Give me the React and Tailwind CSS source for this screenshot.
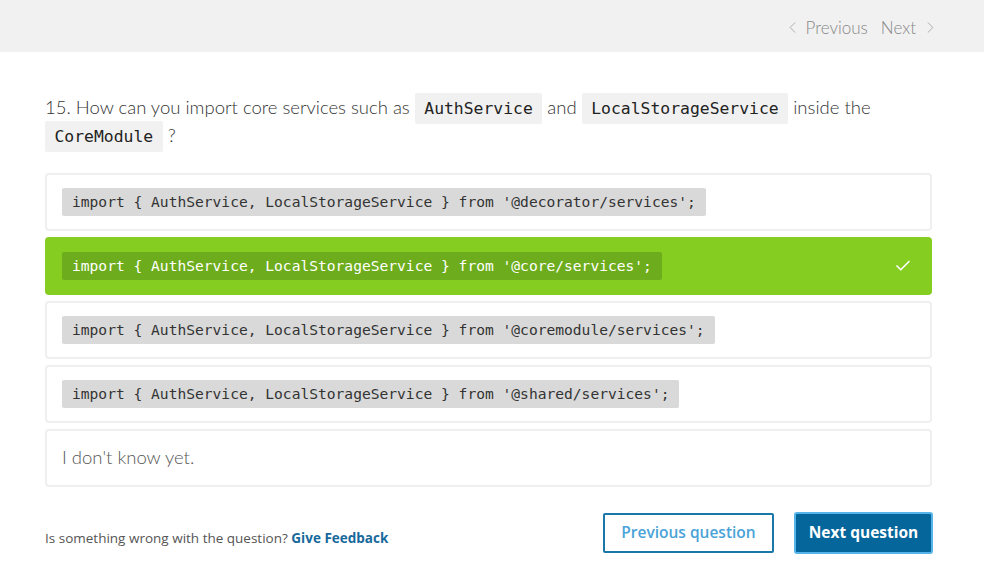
import { Check, ChevronLeft, ChevronRight } from 'lucide-react'

const options = [
  { code: "import { AuthService, LocalStorageService } from '@decorator/services';" },
  { code: "import { AuthService, LocalStorageService } from '@core/services';", correct: true },
  { code: "import { AuthService, LocalStorageService } from '@coremodule/services';" },
  { code: "import { AuthService, LocalStorageService } from '@shared/services';" },
]

const mono = { fontFamily: '"DejaVu Sans Mono", "Liberation Mono", monospace' }
const open = { fontFamily: '"Open Sans", "Noto Sans", sans-serif' }

function InlineCode({ children }) {
  return (
    <code
      className="rounded-[2px] bg-[#f1f1f1] px-[9.5px] py-[6px] text-[16.4px] leading-[20px] text-[#222]"
      style={mono}
    >
      {children}
    </code>
  )
}

function Option({ code, correct }) {
  if (correct) {
    return (
      <div className="flex h-[58px] items-center justify-between rounded-[4px] bg-[#86cd22] pl-[17px] pr-[20px]">
        <span
          className="rounded-[2px] bg-[#6dad1d] px-[10px] py-[5px] text-[14.6px] leading-[18px] text-white"
          style={mono}
        >
          {code}
        </span>
        <Check size={18} strokeWidth={2.2} className="text-white" />
      </div>
    )
  }
  return (
    <div className="flex h-[58px] items-center rounded-[4px] border-2 border-[#efefef] bg-white px-[15px]">
      <span
        className="rounded-[2px] bg-[#d9d9d9] px-[10px] py-[5px] text-[14.6px] leading-[18px] text-[#333]"
        style={mono}
      >
        {code}
      </span>
    </div>
  )
}

export default function App() {
  return (
    <div className="min-h-[576px] bg-white" style={{ fontFamily: 'Lato, "Noto Sans", sans-serif' }}>
      <header className="flex h-[52px] items-center justify-end gap-[13px] bg-[#f1f1f1] pt-[3px] pr-[44px] text-[17px] font-light text-[#888]">
        <span className="flex items-center gap-[4px]">
          <ChevronLeft size={19} strokeWidth={1.2} className="text-[#aaa]" />
          Previous
        </span>
        <span className="flex items-center gap-[5px]">
          Next
          <ChevronRight size={19} strokeWidth={1.2} className="text-[#aaa]" />
        </span>
      </header>

      <main className="px-[45px] pt-[41px]">
        <p className="pr-[60px] text-[18.5px] font-light leading-[28px] text-[#333]">
          15. How can you import core services such as <InlineCode>AuthService</InlineCode> and{' '}
          <InlineCode>LocalStorageService</InlineCode> inside the <InlineCode>CoreModule</InlineCode> ?
        </p>

        <div className="mt-[24px] mr-[7px] flex flex-col gap-[6px]">
          {options.map((o) => (
            <Option key={o.code} code={o.code} correct={o.correct} />
          ))}
          <div className="flex h-[58px] items-center rounded-[4px] border-2 border-[#efefef] bg-white px-[15px] text-[18.5px] font-light text-[#555]">
            I don't know yet.
          </div>
        </div>

        <div className="mt-[25px] mr-[6px] flex items-center justify-between" style={open}>
          <p className="pt-[10px] text-[13.5px] text-[#555]">
            Is something wrong with the question?{' '}
            <a href="#feedback" className="font-bold text-[#17699b]">
              Give Feedback
            </a>
          </p>
          <div className="flex items-center gap-[20px]">
            <button className="h-[40px] w-[171px] rounded-[2px] border-2 border-[#1a77a8] bg-white text-[15.5px] font-semibold text-[#4aa3d8]">
              Previous question
            </button>
            <button className="h-[42px] w-[139px] rounded-[3px] border-2 border-[#57b4e8] bg-[#04669a] text-[15.5px] font-bold text-white">
              Next question
            </button>
          </div>
        </div>
      </main>
    </div>
  )
}
